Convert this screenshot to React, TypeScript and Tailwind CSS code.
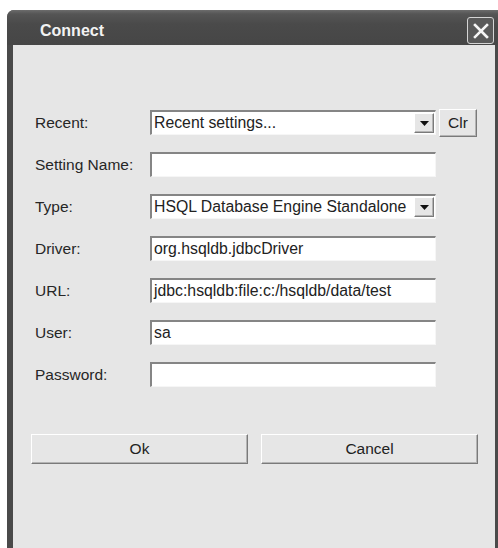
import React from "react";

const sunken =
  "h-[25px] bg-white border-t-2 border-l-2 border-t-[#858585] border-l-[#858585] border-b border-r border-b-[#f6f6f6] border-r-[#f6f6f6] flex items-center";

const raised =
  "bg-[#e6e6e6] border border-t-white border-l-white border-b-[#7a7a7a] border-r-[#7a7a7a] shadow-[inset_-1px_-1px_0_#b4b4b4]";

function ArrowButton() {
  return (
    <div className={`${raised} w-[20px] h-[20px] mr-[1px] flex items-center justify-center`}>
      <svg width="9" height="5" viewBox="0 0 9 5">
        <polygon points="0,0 9,0 4.5,5" fill="#111" />
      </svg>
    </div>
  );
}

function Field({ value, combo }: { value?: string; combo?: boolean }) {
  return (
    <div className={`${sunken} w-[286px] justify-between`}>
      <span className="pl-[2px] text-[15.8px] leading-none text-[#222] whitespace-nowrap">{value ?? ""}</span>
      {combo && <ArrowButton />}
    </div>
  );
}

function Row({ label, children }: { label: string; children: React.ReactNode }) {
  return (
    <div className="flex items-center h-[25px]">
      <div className="w-[115px] text-[15.5px] text-[#262626] leading-none">{label}</div>
      {children}
    </div>
  );
}

export default function App() {
  return (
    <div className="w-[498px] h-[548px] bg-white pt-[10px] pl-[7px] overflow-hidden font-['Liberation_Sans',Arial,sans-serif]">
      <div className="h-[538px] w-[491px] flex flex-col bg-[#4a4a4a] rounded-tl-[7px] overflow-hidden">
        <div className="h-[35px] shrink-0 flex items-center justify-between pl-[33px] pr-[4px] bg-[linear-gradient(#6c6c6c_0px,#555_4px,#4a4a4a_14px,#464646_100%)]">
          <span className="text-[16px] font-bold text-[#f2f2f2] mt-[6px]">
            Connect
          </span>
          <div className="w-[27px] h-[27px] mt-[6px] border-[1.5px] border-[#d4d4d4] rounded-[3px] bg-[#595959] flex items-center justify-center">
            <svg width="16" height="16" viewBox="0 0 16 16">
              <path d="M2 2 L14 14 M14 2 L2 14" stroke="#f4f4f4" strokeWidth="2.6" strokeLinecap="square" />
            </svg>
          </div>
        </div>
        <div className="flex-1 ml-[6px] mr-[3px] bg-[#e6e6e6] flex flex-col pt-[65px]">
          <div className="flex flex-col gap-[17px] pl-[22px]">
            <Row label="Recent:">
              <Field value="Recent settings..." combo />
              <button className={`${raised} ml-[3px] w-[38px] h-[28px] text-[15.5px] text-[#222] leading-none`}>Clr</button>
            </Row>
            <Row label="Setting Name:">
              <Field />
            </Row>
            <Row label="Type:">
              <Field value="HSQL Database Engine Standalone" combo />
            </Row>
            <Row label="Driver:">
              <Field value="org.hsqldb.jdbcDriver" />
            </Row>
            <Row label="URL:">
              <Field value="jdbc:hsqldb:file:c:/hsqldb/data/test" />
            </Row>
            <Row label="User:">
              <Field value="sa" />
            </Row>
            <Row label="Password:">
              <Field />
            </Row>
          </div>
          <div className="flex gap-[13px] pl-[18px] mt-[47px]">
            <button className={`${raised} w-[217px] h-[30px] text-[15.5px] text-[#222] leading-none`}>Ok</button>
            <button className={`${raised} w-[217px] h-[30px] text-[15.5px] text-[#222] leading-none`}>Cancel</button>
          </div>
        </div>
      </div>
    </div>
  );
}
